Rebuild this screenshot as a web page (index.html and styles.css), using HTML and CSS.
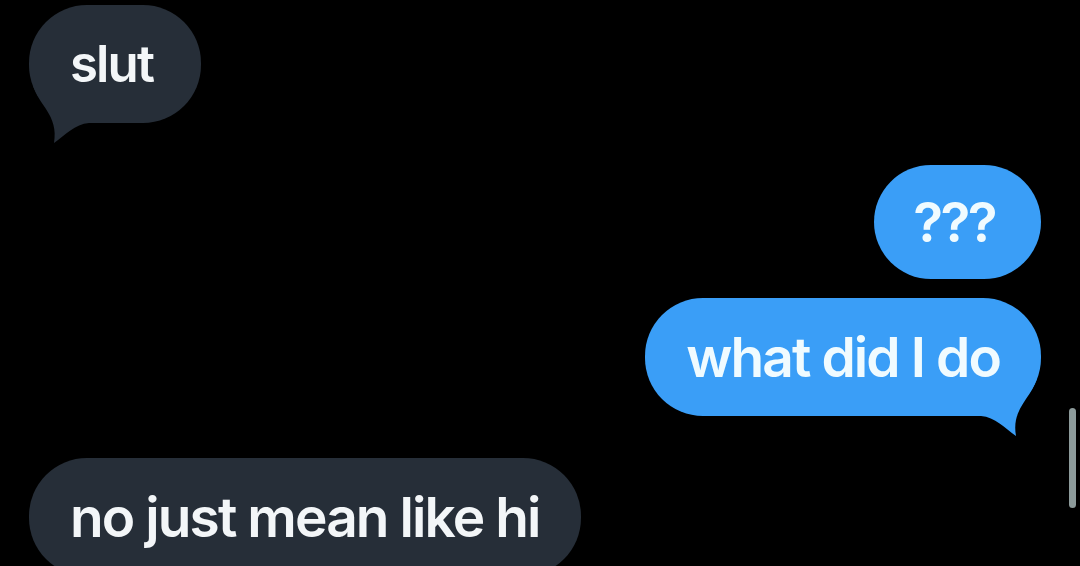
FILE: index.html
```html
<!DOCTYPE html>
<html lang="en">

<head>
    <meta charset="UTF-8">
    <meta name="viewport" content="width=device-width, initial-scale=1.0">
    <title>Messages</title>
    <link rel="stylesheet" href="styles.css">
</head>

<body>
    <div class="thread">
        <div class="msg received first">
            <span>slut</span>
            <svg class="tail tail-left" viewBox="0 0 60 60" width="60" height="60">
                <path d="M4 0 C9 20 30 30 25 58 C36 50 46 39 60 38 L60 0 Z" />
            </svg>
        </div>

        <div class="msg sent gap-big short">
            <span>???</span>
        </div>

        <div class="msg sent gap-small">
            <span>what did I do</span>
            <svg class="tail tail-right" viewBox="0 0 60 60" width="60" height="60">
                <path d="M56 0 C51 20 30 30 35 58 C24 50 14 39 0 38 L0 0 Z" />
            </svg>
        </div>

        <div class="msg received gap-big">
            <span>no just mean like hi</span>
        </div>
    </div>

    <!-- scroll indicator -->
    <div class="scrollbar"></div>
</body>

</html>
```

FILE: styles.css
```css
/* Reset */
* {
    margin: 0;
    padding: 0;
    box-sizing: border-box;
}

body {
    background-color: #000;
    font-family: 'Inter', 'Noto Sans', sans-serif;
    overflow: hidden;
    height: 566px;
    position: relative;
}

/* Thread */
.thread {
    display: flex;
    flex-direction: column;
    padding-top: 5px;
}

.msg {
    position: relative;
    height: 118px;
    line-height: 118px;
    padding: 0 41px;
    border-radius: 58px;
    font-size: 55px;
    font-weight: 600;
    letter-spacing: -1.9px;
    white-space: nowrap;
}

.msg span {
    position: relative;
    z-index: 1;
}

.received {
    align-self: flex-start;
    margin-left: 29px;
    background-color: #262e38;
    color: #f3f6f8;
}

.received .tail {
    fill: #262e38;
}

.sent {
    align-self: flex-end;
    margin-right: 39px;
    background-color: #3a9ef7;
    color: #f0fbff;
}

.sent .tail {
    fill: #3a9ef7;
}

.first {
    font-size: 51px;
    padding: 0 48px 0 41px;
}

.short {
    height: 114px;
    line-height: 114px;
    padding: 0 46px 0 39px;
    letter-spacing: -2.6px;
}

.gap-big {
    margin-top: 42px;
}

.gap-small {
    margin-top: 19px;
}

/* Bubble tails */
.tail {
    position: absolute;
    bottom: -22px;
}

.tail-left {
    left: 0;
}

.tail-right {
    right: 0;
}

.scrollbar {
    position: absolute;
    right: 4px;
    top: 408px;
    width: 7px;
    height: 100px;
    border-radius: 4px;
    background-color: #8d9b9b;
}
```
